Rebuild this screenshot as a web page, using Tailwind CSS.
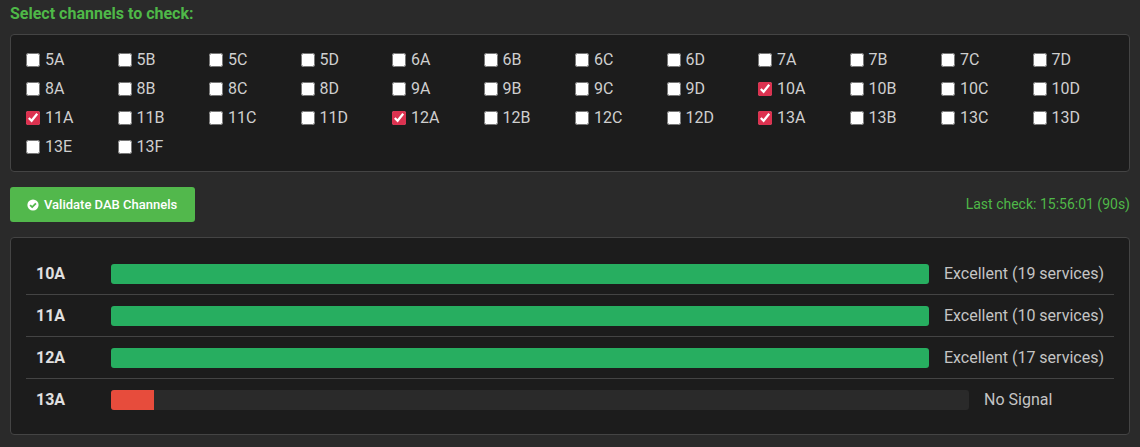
<!DOCTYPE html>
<html>
<head>
<meta charset="utf-8">
<script src="https://cdn.jsdelivr.net/npm/@tailwindcss/browser@4"></script>
</head>
<body class="bg-[#2a2a2a] font-['Roboto',sans-serif] text-[#e0e0e0] overflow-hidden">
<div class="w-[1140px] h-[447px] px-[10px] pt-[4px]">
  <div class="h-[20px] leading-[20px] text-[16px] font-bold text-[#4fb848] mb-[10px]">Select channels to check:</div>
  <div class="h-[138px] bg-[#1c1c1c] border border-[#444] rounded-[4px] pl-[15px] pt-[10px]">
    <div class="grid grid-cols-[repeat(12,91.5px)] auto-rows-[29px] w-[1098px] text-[16px] text-[#cfcfcf]">
      <label class="flex items-center gap-[5px]"><input type="checkbox" class="w-[14px] h-[14px] accent-[#dc3250]"><span>5A</span></label>
      <label class="flex items-center gap-[5px]"><input type="checkbox" class="w-[14px] h-[14px] accent-[#dc3250]"><span>5B</span></label>
      <label class="flex items-center gap-[5px]"><input type="checkbox" class="w-[14px] h-[14px] accent-[#dc3250]"><span>5C</span></label>
      <label class="flex items-center gap-[5px]"><input type="checkbox" class="w-[14px] h-[14px] accent-[#dc3250]"><span>5D</span></label>
      <label class="flex items-center gap-[5px]"><input type="checkbox" class="w-[14px] h-[14px] accent-[#dc3250]"><span>6A</span></label>
      <label class="flex items-center gap-[5px]"><input type="checkbox" class="w-[14px] h-[14px] accent-[#dc3250]"><span>6B</span></label>
      <label class="flex items-center gap-[5px]"><input type="checkbox" class="w-[14px] h-[14px] accent-[#dc3250]"><span>6C</span></label>
      <label class="flex items-center gap-[5px]"><input type="checkbox" class="w-[14px] h-[14px] accent-[#dc3250]"><span>6D</span></label>
      <label class="flex items-center gap-[5px]"><input type="checkbox" class="w-[14px] h-[14px] accent-[#dc3250]"><span>7A</span></label>
      <label class="flex items-center gap-[5px]"><input type="checkbox" class="w-[14px] h-[14px] accent-[#dc3250]"><span>7B</span></label>
      <label class="flex items-center gap-[5px]"><input type="checkbox" class="w-[14px] h-[14px] accent-[#dc3250]"><span>7C</span></label>
      <label class="flex items-center gap-[5px]"><input type="checkbox" class="w-[14px] h-[14px] accent-[#dc3250]"><span>7D</span></label>
      <label class="flex items-center gap-[5px]"><input type="checkbox" class="w-[14px] h-[14px] accent-[#dc3250]"><span>8A</span></label>
      <label class="flex items-center gap-[5px]"><input type="checkbox" class="w-[14px] h-[14px] accent-[#dc3250]"><span>8B</span></label>
      <label class="flex items-center gap-[5px]"><input type="checkbox" class="w-[14px] h-[14px] accent-[#dc3250]"><span>8C</span></label>
      <label class="flex items-center gap-[5px]"><input type="checkbox" class="w-[14px] h-[14px] accent-[#dc3250]"><span>8D</span></label>
      <label class="flex items-center gap-[5px]"><input type="checkbox" class="w-[14px] h-[14px] accent-[#dc3250]"><span>9A</span></label>
      <label class="flex items-center gap-[5px]"><input type="checkbox" class="w-[14px] h-[14px] accent-[#dc3250]"><span>9B</span></label>
      <label class="flex items-center gap-[5px]"><input type="checkbox" class="w-[14px] h-[14px] accent-[#dc3250]"><span>9C</span></label>
      <label class="flex items-center gap-[5px]"><input type="checkbox" class="w-[14px] h-[14px] accent-[#dc3250]"><span>9D</span></label>
      <label class="flex items-center gap-[5px]"><input type="checkbox" checked class="w-[14px] h-[14px] accent-[#dc3250]"><span>10A</span></label>
      <label class="flex items-center gap-[5px]"><input type="checkbox" class="w-[14px] h-[14px] accent-[#dc3250]"><span>10B</span></label>
      <label class="flex items-center gap-[5px]"><input type="checkbox" class="w-[14px] h-[14px] accent-[#dc3250]"><span>10C</span></label>
      <label class="flex items-center gap-[5px]"><input type="checkbox" class="w-[14px] h-[14px] accent-[#dc3250]"><span>10D</span></label>
      <label class="flex items-center gap-[5px]"><input type="checkbox" checked class="w-[14px] h-[14px] accent-[#dc3250]"><span>11A</span></label>
      <label class="flex items-center gap-[5px]"><input type="checkbox" class="w-[14px] h-[14px] accent-[#dc3250]"><span>11B</span></label>
      <label class="flex items-center gap-[5px]"><input type="checkbox" class="w-[14px] h-[14px] accent-[#dc3250]"><span>11C</span></label>
      <label class="flex items-center gap-[5px]"><input type="checkbox" class="w-[14px] h-[14px] accent-[#dc3250]"><span>11D</span></label>
      <label class="flex items-center gap-[5px]"><input type="checkbox" checked class="w-[14px] h-[14px] accent-[#dc3250]"><span>12A</span></label>
      <label class="flex items-center gap-[5px]"><input type="checkbox" class="w-[14px] h-[14px] accent-[#dc3250]"><span>12B</span></label>
      <label class="flex items-center gap-[5px]"><input type="checkbox" class="w-[14px] h-[14px] accent-[#dc3250]"><span>12C</span></label>
      <label class="flex items-center gap-[5px]"><input type="checkbox" class="w-[14px] h-[14px] accent-[#dc3250]"><span>12D</span></label>
      <label class="flex items-center gap-[5px]"><input type="checkbox" checked class="w-[14px] h-[14px] accent-[#dc3250]"><span>13A</span></label>
      <label class="flex items-center gap-[5px]"><input type="checkbox" class="w-[14px] h-[14px] accent-[#dc3250]"><span>13B</span></label>
      <label class="flex items-center gap-[5px]"><input type="checkbox" class="w-[14px] h-[14px] accent-[#dc3250]"><span>13C</span></label>
      <label class="flex items-center gap-[5px]"><input type="checkbox" class="w-[14px] h-[14px] accent-[#dc3250]"><span>13D</span></label>
      <label class="flex items-center gap-[5px]"><input type="checkbox" class="w-[14px] h-[14px] accent-[#dc3250]"><span>13E</span></label>
      <label class="flex items-center gap-[5px]"><input type="checkbox" class="w-[14px] h-[14px] accent-[#dc3250]"><span>13F</span></label>
    </div>
  </div>
  <div class="flex items-center justify-between mt-[15px] h-[35px]">
    <button class="h-[35px] w-[185px] bg-[#52b84c] rounded-[3px] text-white text-[13px] font-medium flex items-center pl-[17px] gap-[5px]">
      <svg width="12" height="12" viewBox="0 0 12 12"><circle cx="6" cy="6" r="5.6" fill="#fff"/><path d="M3.1 6.1 5.2 8.1 8.9 4.3" fill="none" stroke="#52b84c" stroke-width="1.8"/></svg>
      <span>Validate DAB Channels</span>
    </button>
    <span class="text-[14px] text-[#4fb848]">Last check: 15:56:01 (90s)</span>
  </div>
  <div class="mt-[15px] h-[198px] bg-[#1c1c1c] border border-[#444] rounded-[4px] px-[15px] pt-[15px] text-[16px] text-[#c4c4c4]">
    <div class="flex items-center h-[42px] border-b border-[#444] px-[10px] pt-[1px]">
      <span class="w-[75px] font-bold text-[#e0e0e0] -mt-[1px]">10A</span>
      <div class="flex-1 h-[20px] bg-[#2a2a2a] rounded-[3px] overflow-hidden"><div class="h-full bg-[#27ae60]"></div></div>
      <span class="ml-[15px] min-w-[120px] -mt-[1px]">Excellent (19 services)</span>
    </div>
    <div class="flex items-center h-[42px] border-b border-[#444] px-[10px] pt-[1px]">
      <span class="w-[75px] font-bold text-[#e0e0e0] -mt-[1px]">11A</span>
      <div class="flex-1 h-[20px] bg-[#2a2a2a] rounded-[3px] overflow-hidden"><div class="h-full bg-[#27ae60]"></div></div>
      <span class="ml-[15px] min-w-[120px] -mt-[1px]">Excellent (10 services)</span>
    </div>
    <div class="flex items-center h-[42px] border-b border-[#444] px-[10px] pt-[1px]">
      <span class="w-[75px] font-bold text-[#e0e0e0] -mt-[1px]">12A</span>
      <div class="flex-1 h-[20px] bg-[#2a2a2a] rounded-[3px] overflow-hidden"><div class="h-full bg-[#27ae60]"></div></div>
      <span class="ml-[15px] min-w-[120px] -mt-[1px]">Excellent (17 services)</span>
    </div>
    <div class="flex items-center h-[42px] px-[10px] pb-[1px]">
      <span class="w-[75px] font-bold text-[#e0e0e0]">13A</span>
      <div class="flex-1 h-[20px] bg-[#2a2a2a] rounded-[3px] overflow-hidden"><div class="h-full w-[5%] bg-[#e74c3c]"></div></div>
      <span class="ml-[15px] min-w-[120px]">No Signal</span>
    </div>
  </div>
</div>
</body>
</html>
